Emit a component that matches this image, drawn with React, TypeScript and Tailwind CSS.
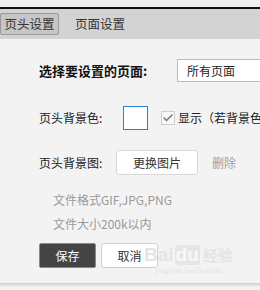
import { Check } from "lucide-react"

const font = { fontFamily: '"Noto Sans CJK SC", "Noto Sans", sans-serif' }

export default function App() {
  return (
    <div className="relative h-[290px] w-[260px] overflow-hidden bg-[#f4f4f4] text-[12px] text-[#222]" style={font}>
      {/* top strip */}
      <div className="h-[7px] bg-[#f0f0f0]" />
      <div className="h-[2px] bg-[#111]" />

      {/* tabs */}
      <div className="flex h-[30px] items-center bg-[#d3d3d3]">
        <div className="flex h-[22px] w-[59px] items-center justify-center rounded-[2px] border border-[#9a9a9a] bg-[#c6c6c6] text-[12.5px] text-[#333]">
          页头设置
        </div>
        <div className="ml-[16px] text-[12.5px] text-[#333]">页面设置</div>
      </div>

      {/* content */}
      <div className="h-[244px] bg-[#f3f3f3] pl-[39px]">
        <div className="flex items-center pt-[20px]">
          <span className="w-[138px] shrink-0 whitespace-nowrap text-[13px] font-bold text-[#111]">选择要设置的页面:</span>
          <div className="flex h-[23px] w-[120px] shrink-0 items-center border border-[#bcbcbc] bg-white pl-[9px] text-[#222]">
            所有页面
          </div>
        </div>

        <div className="mt-[24px] flex items-center">
          <span className="w-[84px] shrink-0 whitespace-nowrap text-[#222]">页头背景色:</span>
          <div className="h-[24px] w-[25px] shrink-0 border border-[#2a7fd0] bg-white" />
          <div className="ml-[13px] flex h-[14px] w-[14px] shrink-0 items-center justify-center border border-[#d0d0d0] bg-[#f7f7f7]">
            <Check className="h-[12px] w-[12px] text-[#777]" strokeWidth={3} />
          </div>
          <span className="ml-[3px] whitespace-nowrap text-[#222]">显示（若背景色</span>
        </div>

        <div className="mt-[20px] flex items-center">
          <span className="w-[77px] shrink-0 whitespace-nowrap text-[#222]">页头背景图:</span>
          <div className="flex h-[25px] w-[82px] shrink-0 items-center justify-center rounded-[3px] border border-[#d8d8d8] bg-white text-[#333]">
            更换图片
          </div>
          <span className="ml-[14px] text-[#a0a0a0]">删除</span>
        </div>

        <div className="mt-[13px] pl-[14px] leading-[24px] text-[#9a9a9a]">
          <div>文件格式GIF,JPG,PNG</div>
          <div>文件大小200k以内</div>
        </div>

        <div className="mt-[7px] flex gap-[5px]">
          <div className="flex h-[25px] w-[57px] items-center justify-center rounded-[2px] border border-[#8a8a8a] bg-[#444] text-white">
            保存
          </div>
          <div className="flex h-[25px] w-[57px] items-center justify-center rounded-[3px] border border-[#d0d0d0] bg-white text-[#333]">
            取消
          </div>
        </div>
      </div>

      {/* bottom shadow */}
      <div className="h-[4px] bg-gradient-to-b from-[#cfcfcf] to-[#f2f2f2]" />

      {/* watermark */}
      <div className="pointer-events-none absolute left-[144px] top-[245px] flex flex-col items-center text-[#e4e4e4]">
        <div className="flex items-center text-[19px] font-bold leading-[20px]" style={{ fontFamily: '"Liberation Sans", sans-serif' }}>
          Bai<span className="mx-[1px] rounded-[3px] bg-[#e6e6e6] px-[1px] text-[#f8f8f8]">du</span>
          <span className="ml-[2px] text-[15px]" style={font}>经验</span>
        </div>
        <div className="text-[9px] leading-[10px]" style={{ fontFamily: '"Liberation Serif", serif' }}>jingyan.baidu.com</div>
      </div>
    </div>
  )
}
